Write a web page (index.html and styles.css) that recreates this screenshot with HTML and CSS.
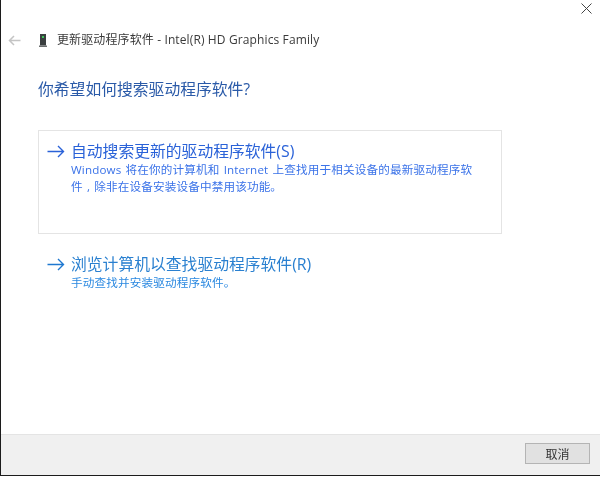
FILE: index.html
```html
<!DOCTYPE html>
<html lang="zh-CN">
<head>
<meta charset="utf-8">
<title>更新驱动程序软件</title>
<link rel="stylesheet" href="styles.css">
</head>
<body>
<div class="window">
  <div class="close-row">
    <svg class="close-icon" width="11" height="11" viewBox="0 0 11 11"><path d="M0.5 0.5L10.5 10.5M10.5 0.5L0.5 10.5" stroke="#444" stroke-width="1" fill="none"/></svg>
  </div>
  <header class="titlebar">
    <svg class="back-icon" width="13" height="11" viewBox="0 0 13 11"><path d="M12.5 5.5H1.5M6 1L1.5 5.5L6 10" stroke="#c4c4c4" stroke-width="1.5" fill="none"/></svg>
    <svg class="device-icon" width="8" height="13" viewBox="0 0 8 13"><rect x="1" y="0" width="6" height="11.5" fill="#3a3f40"/><rect x="0" y="11.5" width="8" height="1.5" fill="#6a6e6e"/><rect x="3" y="2" width="2" height="2" fill="#3fc35a"/></svg>
    <span class="title">更新驱动程序软件 - Intel(R) HD Graphics Family</span>
  </header>
  <main class="content">
    <h1 class="heading">你希望如何搜索驱动程序软件?</h1>
    <div class="option option-boxed">
      <svg class="arrow" width="18" height="13" viewBox="0 0 18 13"><path d="M0.5 6.5H16.5M11 1L16.5 6.5L11 12" stroke="#2a62d8" stroke-width="1.4" fill="none"/></svg>
      <div class="option-text">
        <div class="option-title">自动搜索更新的驱动程序软件(S)</div>
        <div class="option-desc">Windows 将在你的计算机和 Internet 上查找用于相关设备的最新驱动程序软<br>件 , 除非在设备安装设备中禁用该功能。</div>
      </div>
    </div>
    <div class="option option-plain">
      <svg class="arrow" width="18" height="13" viewBox="0 0 18 13"><path d="M0.5 6.5H16.5M11 1L16.5 6.5L11 12" stroke="#1f78d0" stroke-width="1.4" fill="none"/></svg>
      <div class="option-text">
        <div class="option-title option-title-alt">浏览计算机以查找驱动程序软件(R)</div>
        <div class="option-desc option-desc-alt">手动查找并安装驱动程序软件。</div>
      </div>
    </div>
  </main>
  <footer class="footer">
    <button class="cancel" type="button">取消</button>
  </footer>
</div>
</body>
</html>
```
FILE: styles.css
```css
* { box-sizing: border-box; }
html, body { margin: 0; padding: 0; background: #fff; }
body {
  width: 600px;
  height: 477px;
  overflow: hidden;
  font-family: "Open Sans", "Noto Sans CJK SC", sans-serif;
}
.window {
  height: 476px;
  border-left: 1px solid #1c1c1c;
  border-bottom: 1px solid #1c1c1c;
  display: flex;
  flex-direction: column;
  filter: blur(0.35px);
}
.close-row {
  height: 33px;
  display: flex;
  justify-content: flex-end;
  padding: 3px 8px 0 0;
}
.titlebar {
  height: 14px;
  display: flex;
  align-items: center;
  padding-left: 7px;
}
.back-icon { margin-right: 18px; }
.device-icon { margin-right: 10px; }
.title {
  font-size: 12px;
  letter-spacing: 0.12px;
  line-height: 14px;
  color: #3a3a3a;
  white-space: nowrap;
}
.content {
  flex: 1;
  padding: 0 0 0 37px;
}
.heading {
  margin: 32px 0 0;
  font-size: 15.8px;
  line-height: 20px;
  font-weight: 400;
  color: #2a5aa8;
}
.option {
  display: flex;
  width: 464px;
}
.option-boxed {
  margin-top: 31px;
  height: 104px;
  padding: 10px 0 0 8px;
  border: 1px solid #e4e4e4;
}
.option-plain {
  margin-top: 19px;
  padding: 0 0 0 8px;
  border: 1px solid transparent;
}
.arrow { margin-top: 4px; margin-right: 6px; flex: none; }
.option-title {
  font-size: 15.8px;
  line-height: 20px;
  color: #2a62d8;
  white-space: nowrap;
}
.option-title-alt { color: #2a80d0; }
.option-desc {
  font-size: 11.6px;
  letter-spacing: 0.15px;
  word-spacing: 1px;
  line-height: 17px;
  margin-top: 0;
  color: #3a72e8;
  white-space: nowrap;
}
.option-desc-alt { color: #2a88e0; }
.footer {
  height: 41px;
  background: #f0f0f0;
  border-top: 1px solid #e4e4e4;
  display: flex;
  justify-content: flex-end;
  padding: 8px 10px 0 0;
}
.cancel {
  width: 65px;
  height: 21px;
  padding: 0;
  background: #e1e1e1;
  border: 1px solid #b4b4b4;
  border-radius: 0;
  font-family: "Noto Sans CJK SC", sans-serif;
  font-size: 12px;
  line-height: 18px;
  color: #333;
}
```
